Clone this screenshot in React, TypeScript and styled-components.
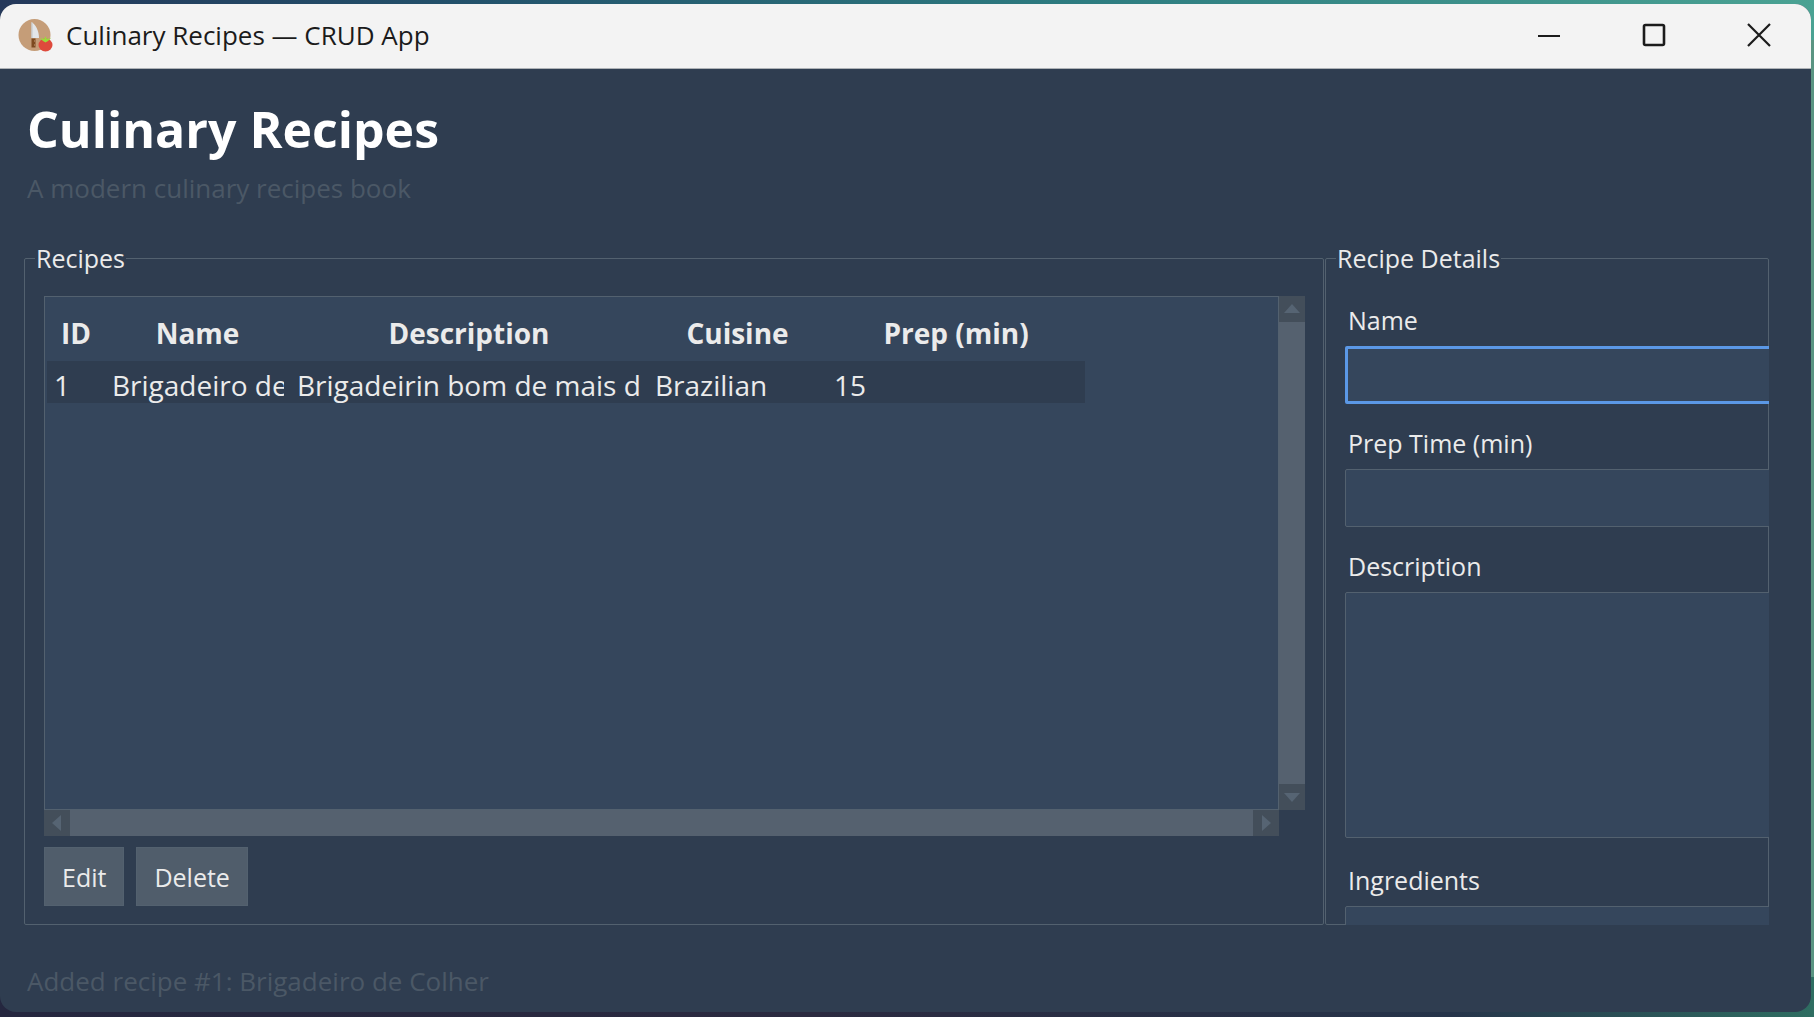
import React from "react";
import styled, { createGlobalStyle, css } from "styled-components";

const color = {
  bg: "#2f3d50",
  field: "#35465c",
  border: "#53616f",
  thumb: "#55616f",
  trough: "#434e5a",
  muted: "#4b5866",
  text: "#ebebeb",
  focus: "#5b98e6",
};

const Global = createGlobalStyle`
  *, *::before, *::after { box-sizing: border-box; }
  html, body, #root { height: 100%; }
  body {
    margin: 0;
    overflow: hidden;
    font-family: "Open Sans", "Noto Sans", sans-serif;
    font-size: 25px;
    line-height: 36px;
    color: ${color.text};
  }
  button, input, textarea { font: inherit; color: inherit; }
`;

const Desktop = styled.div`
  height: 100vh;
  padding: 4px 3px 5px 0;
  background:
    linear-gradient(90deg, #24385a 0%, #22506a 25%, #2d7c80 60%, #4aa293 100%) top / 100% 40px no-repeat,
    linear-gradient(90deg, #25273f 0%, #2b2a40 45%, #26344a 80%, #2f6e62 100%) bottom / 100% 40px no-repeat,
    #5a9482;
`;

const Window = styled.main`
  display: flex;
  flex-direction: column;
  height: 100%;
  overflow: hidden;
  border-radius: 16px;
  background: ${color.bg};
`;

const TitleBar = styled.header`
  display: flex;
  align-items: center;
  flex: none;
  height: 65px;
  padding: 0 0 2px 18px;
  border-bottom: 1px solid #aeb2b6;
  background: #f3f3f3;
  color: #1b1b1b;
`;

const WindowTitle = styled.span`
  flex: 1;
  margin-left: 12px;
  font-size: 26px;
`;

const WindowButton = styled.button`
  display: grid;
  place-items: center;
  width: 105px;
  height: 62px;
  padding: 0;
  border: 0;
  background: transparent;
`;

const Heading = styled.div`
  display: flex;
  flex-direction: column;
  flex: none;
  gap: 3px;
  padding: 22px 27px 0;
`;

const AppTitle = styled.h1`
  margin: 0;
  font-size: 50px;
  line-height: 76px;
  font-weight: 700;
  color: #fff;
`;

const Muted = styled.p`
  margin: 0;
  font-size: 26px;
  color: ${color.muted};
`;

const Panels = styled.div`
  display: grid;
  grid-template-columns: minmax(0, 1fr) 444px;
  grid-template-rows: minmax(0, 1fr);
  column-gap: 1px;
  flex: 1;
  min-height: 0;
  padding: 34px 42px 0 24px;
`;

const PanelClip = styled.div`
  min-width: 0;
  overflow: hidden;
`;

const Group = styled.fieldset`
  display: flex;
  flex-direction: column;
  min-width: 0;
  height: 100%;
  margin: 0;
  padding: 0;
  border: 1px solid ${color.border};
  border-radius: 2px;
`;

const Legend = styled.legend`
  margin-left: 10px;
  padding: 0 1px;
`;

const GroupBody = styled.div<{ $inset: string }>`
  display: flex;
  flex-direction: column;
  flex: 1;
  min-height: 0;
  padding: ${(p) => p.$inset};
`;

const TableArea = styled.div`
  display: grid;
  grid-template-columns: minmax(0, 1fr) 26px;
  grid-template-rows: minmax(0, 1fr) 26px;
  flex: 1;
  min-height: 0;
`;

const TableBox = styled.div`
  overflow: hidden;
  padding-left: 2px;
  border: 1px solid ${color.border};
  background: ${color.field};
`;

const Table = styled.table`
  width: 1038px;
  table-layout: fixed;
  border-collapse: collapse;
  font-size: 28px;
`;

const HeadCell = styled.th<{ $width: number }>`
  width: ${(p) => p.$width}px;
  height: 64px;
  padding: 8px 0 0;
  font-weight: 700;
  text-align: center;
`;

const Cell = styled.td`
  height: 42px;
  padding: 6px 6px 0 7px;
  background: ${color.bg};
`;

const CellText = styled.div`
  overflow: hidden;
  white-space: nowrap;
`;

const ScrollBar = styled.div<{ $vertical?: boolean }>`
  display: flex;
  flex-direction: ${(p) => (p.$vertical ? "column" : "row")};
  justify-content: space-between;
  background: ${color.thumb};
`;

const ScrollButton = styled.button`
  display: grid;
  place-items: center;
  width: 26px;
  height: 26px;
  padding: 0;
  border: 0;
  background: ${color.trough};
`;

const Actions = styled.div`
  display: flex;
  flex: none;
  gap: 12px;
  padding-top: 11px;
`;

const ActionButton = styled.button`
  height: 59px;
  padding: 0 17px;
  border: 1px solid ${color.border};
  background: #505d6b;
`;

const FieldLabel = styled.label`
  flex: none;
  margin-left: 3px;
  padding: 16px 0 8px;
`;

const fieldBox = css`
  flex: none;
  width: 520px;
  padding: 8px 12px;
  border: 1px solid ${color.border};
  border-radius: 2px;
  outline: 0;
  background: ${color.field};
`;

const TextInput = styled.input<{ $active?: boolean }>`
  ${fieldBox}
  height: 58px;
  margin-bottom: 5px;
  ${(p) => p.$active && `border: 3px solid ${color.focus};`}
`;

const TextArea = styled.textarea`
  ${fieldBox}
  height: 246px;
  margin-bottom: 8px;
  resize: none;
`;

const StatusBar = styled.footer`
  flex: none;
  padding: 38px 27px 13px;
`;

const AppIcon = () => (
  <svg width="36" height="36" viewBox="0 0 36 36" aria-hidden="true">
    <circle cx="16.5" cy="18" r="16" fill="#c59d78" />
    <path d="M13.500 5c4.500 3 7.500 9 7.500 16h-7.500z" fill="#e3e6e9" />
    <path d="M14 5.500V21" stroke="#c2c6c9" />
    <path d="M13.500 21.500h4v9h-4z" fill="#7d4a20" />
    <path d="M16.500 23.500v1m0 3v1" stroke="#c9a07a" />
    <ellipse cx="27.500" cy="28" rx="7" ry="6.500" fill="#de4a3c" />
    <path d="M22 21l4 1 1.500-2.500L29 22l4-1-3 3-2.500 1.500L25 24z" fill="#9adb3a" />
  </svg>
);

const arrows = {
  up: "M13 8l8 9H5z",
  down: "M13 18l8-9H5z",
  left: "M8 13l9-8v16z",
  right: "M18 13l-9-8v16z",
};

const ScrollArrow = ({ dir }: { dir: keyof typeof arrows }) => (
  <ScrollButton type="button" aria-label={`Scroll ${dir}`}>
    <svg width="26" height="26" viewBox="0 0 26 26">
      <path d={arrows[dir]} fill="#566473" />
    </svg>
  </ScrollButton>
);

const controls = [
  { name: "Minimize", path: "M1 13h22", stroke: 2 },
  {
    name: "Maximize",
    path: "M3.500 2h17a1.500 1.500 0 0 1 1.500 1.500v17a1.500 1.500 0 0 1-1.500 1.500h-17A1.500 1.500 0 0 1 2 20.500v-17A1.500 1.500 0 0 1 3.500 2z",
    stroke: 2.6,
  },
  { name: "Close", path: "M1 1l22 22M23 1L1 23", stroke: 2.2 },
];

const columns = [
  { title: "ID", width: 58 },
  { title: "Name", width: 185 },
  { title: "Description", width: 358 },
  { title: "Cuisine", width: 179 },
  { title: "Prep (min)", width: 258 },
];

const recipes = [["1", "Brigadeiro de", "Brigadeirin bom de mais d", "Brazilian", "15"]];

export default function App() {
  return (
    <>
      <Global />
      <Desktop>
        <Window>
          <TitleBar>
            <AppIcon />
            <WindowTitle>Culinary Recipes — CRUD App</WindowTitle>
            {controls.map((c) => (
              <WindowButton key={c.name} type="button" aria-label={c.name}>
                <svg width="24" height="24" viewBox="0 0 24 24" fill="none" stroke="#1b1b1b" strokeWidth={c.stroke}>
                  <path d={c.path} />
                </svg>
              </WindowButton>
            ))}
          </TitleBar>
          <Heading>
            <AppTitle>Culinary Recipes</AppTitle>
            <Muted>A modern culinary recipes book</Muted>
          </Heading>
          <Panels>
            <PanelClip>
              <Group>
                <Legend>Recipes</Legend>
                <GroupBody $inset="20px 18px 18px 19px">
                  <TableArea>
                    <TableBox>
                      <Table>
                        <thead>
                          <tr>
                            {columns.map((c) => (
                              <HeadCell key={c.title} $width={c.width} scope="col">
                                {c.title}
                              </HeadCell>
                            ))}
                          </tr>
                        </thead>
                        <tbody>
                          {recipes.map((row) => (
                            <tr key={row[0]}>
                              {row.map((value, i) => (
                                <Cell key={columns[i].title}>
                                  <CellText>{value}</CellText>
                                </Cell>
                              ))}
                            </tr>
                          ))}
                        </tbody>
                      </Table>
                    </TableBox>
                    <ScrollBar $vertical>
                      <ScrollArrow dir="up" />
                      <ScrollArrow dir="down" />
                    </ScrollBar>
                    <ScrollBar>
                      <ScrollArrow dir="left" />
                      <ScrollArrow dir="right" />
                    </ScrollBar>
                  </TableArea>
                  <Actions>
                    <ActionButton type="button">Edit</ActionButton>
                    <ActionButton type="button">Delete</ActionButton>
                  </Actions>
                </GroupBody>
              </Group>
            </PanelClip>
            <PanelClip>
              <Group>
                <Legend>Recipe Details</Legend>
                <GroupBody $inset="10px 0 0 19px">
                  <FieldLabel htmlFor="name">Name</FieldLabel>
                  <TextInput id="name" $active />
                  <FieldLabel htmlFor="prep">Prep Time (min)</FieldLabel>
                  <TextInput id="prep" />
                  <FieldLabel htmlFor="description">Description</FieldLabel>
                  <TextArea id="description" />
                  <FieldLabel htmlFor="ingredients">Ingredients</FieldLabel>
                  <TextArea id="ingredients" />
                </GroupBody>
              </Group>
            </PanelClip>
          </Panels>
          <StatusBar>
            <Muted role="status">Added recipe #1: Brigadeiro de Colher</Muted>
          </StatusBar>
        </Window>
      </Desktop>
    </>
  );
}
